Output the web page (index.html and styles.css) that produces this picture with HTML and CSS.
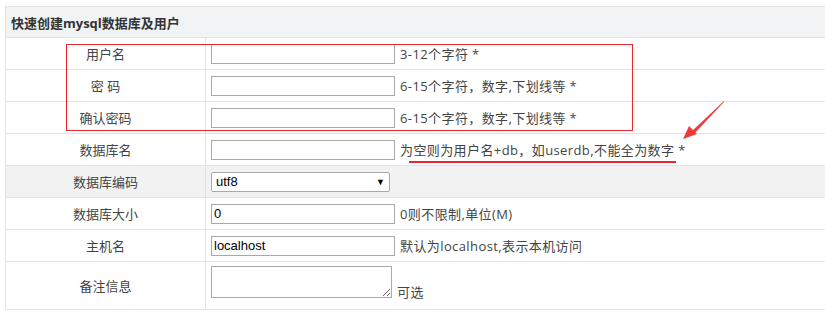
FILE: index.html
```html
<!DOCTYPE html>
<html>
	<head>
		<meta charset="utf-8">
		<title>快速创建mysql数据库及用户</title>
		<link rel="stylesheet" href="styles.css">
	</head>
	<body>
		<div class="wrap">
			<div class="form">
				<div class="head">快速创建mysql数据库及用户</div>
				<div class="row">
					<div class="label">用户名</div>
					<div class="field"><input type="text" class="txt"><span class="tip">3-12个字符 *</span></div>
				</div>
				<div class="row">
					<div class="label">密&nbsp;码</div>
					<div class="field"><input type="password" class="txt"><span class="tip">6-15个字符，数字,下划线等 *</span></div>
				</div>
				<div class="row">
					<div class="label">确认密码</div>
					<div class="field"><input type="password" class="txt"><span class="tip">6-15个字符，数字,下划线等 *</span></div>
				</div>
				<div class="row">
					<div class="label">数据库名</div>
					<div class="field"><input type="text" class="txt"><span class="tip">为空则为用户名+db，如userdb,不能全为数字 *</span></div>
				</div>
				<div class="row gray">
					<div class="label">数据库编码</div>
					<div class="field">
						<div class="select"><span>utf8</span><i>▼</i></div>
					</div>
				</div>
				<div class="row">
					<div class="label">数据库大小</div>
					<div class="field"><input type="text" class="txt" value="0"><span class="tip">0则不限制,单位(M)</span></div>
				</div>
				<div class="row">
					<div class="label">主机名</div>
					<div class="field"><input type="text" class="txt" value="localhost"><span class="tip">默认为localhost,表示本机访问</span></div>
				</div>
				<div class="row tall">
					<div class="label">备注信息</div>
					<div class="field bottom"><textarea class="area"></textarea><span class="tip">可选</span></div>
				</div>
			</div>
			<!-- annotations drawn over the screenshot -->
			<div class="mark-box"></div>
			<div class="mark-line"></div>
			<svg class="mark-arrow" width="50" height="44" viewBox="0 0 50 44">
				<path d="M46 2 L13 33 L15 36 L46 3 Z" fill="#f03a3a"/>
				<path d="M5 40 L11 27 L19 35 Z" fill="#f03a3a"/>
			</svg>
		</div>
	</body>
</html>
```

FILE: styles.css
```css
body{margin: 0; background-color: #fff; overflow: hidden; font-family: "Open Sans", "Noto Sans CJK SC", sans-serif; font-size: 13px; color: #444;}
.wrap{position: relative; padding: 6px 0 0 5px;}
.form{width: 830px; border-left: 1px solid #e3e3e3; border-top: 1px solid #e3e3e3;}
.head{height: 31px; box-sizing: border-box; border-bottom: 1px solid #e3e3e3; background-color: #f2f3f5; padding-left: 5px; display: flex; align-items: center; font-weight: bold; color: #333;}
.row{display: grid; grid-template-columns: 200px 1fr; height: 32px; box-sizing: border-box; border-bottom: 1px solid #e3e3e3;}
.row.tall{height: 48px;}
.gray{background-color: #f2f2f2;}
.label{border-right: 1px solid #e3e3e3; display: flex; align-items: center; justify-content: center;}
.field{display: flex; align-items: center; padding-left: 5px;}
.field.bottom{align-items: flex-end; padding-bottom: 11px;}
.txt{box-sizing: border-box; width: 184px; height: 20px; margin: 0 5px 0 0; padding: 0 2px; border: 1px solid #a9a9a9; font-family: "Liberation Sans", Arial, sans-serif; font-size: 13px; color: #000;}
.tip{letter-spacing: 0.4px;}
.select{box-sizing: border-box; width: 179px; height: 20px; border: 1px solid #a9a9a9; border-radius: 2px; background-color: #fff; display: flex; align-items: center; justify-content: space-between; padding: 0 4px; font-family: "Liberation Sans", Arial, sans-serif; color: #000;}
.select i{font-style: normal; font-size: 9px;}
.area{box-sizing: border-box; width: 181px; height: 32px; margin: 0 5px 0 0; border: 1px solid #a9a9a9; resize: both;}
.bottom .tip{line-height: 1; margin-bottom: -1px;}
.mark-box{position: absolute; left: 66px; top: 44px; width: 565px; height: 85px; border: 1px solid #e8282c;}
.mark-line{position: absolute; left: 409px; top: 161px; width: 267px; height: 2px; background-color: #e8282c;}
.mark-arrow{position: absolute; left: 678px; top: 99px;}
```
